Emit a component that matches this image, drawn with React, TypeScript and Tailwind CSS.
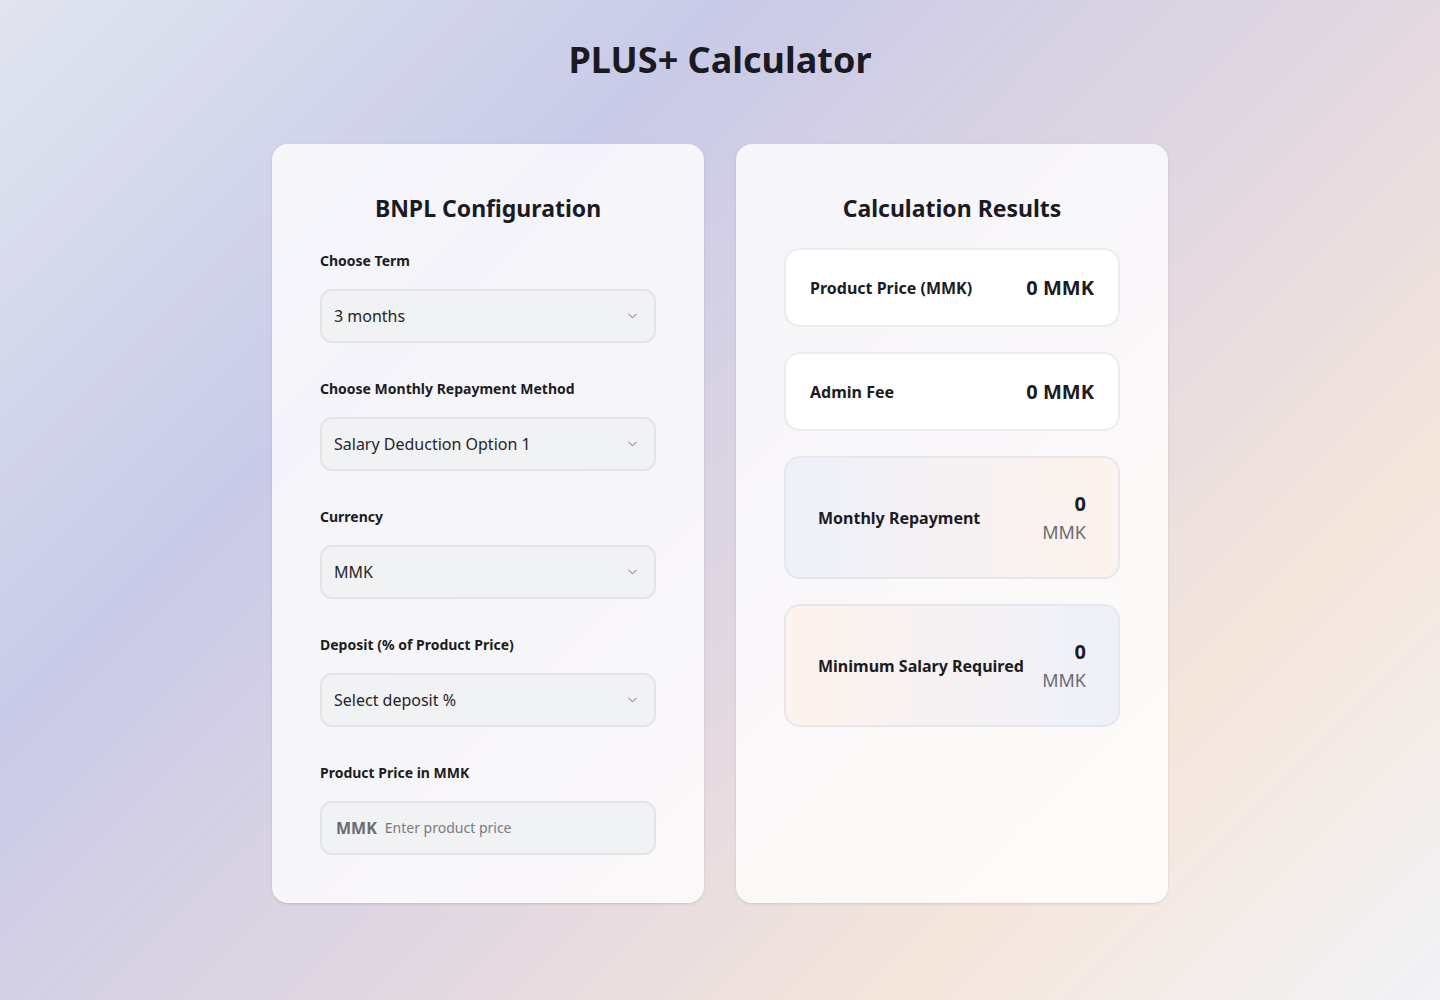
import { ChevronDown } from "lucide-react";

const font = { fontFamily: '"Noto Sans", "Open Sans", sans-serif' };

function SelectField({ label, value }: { label: string; value: string }) {
  return (
    <div>
      <div className="text-sm font-bold text-[#1c1c22] leading-5 mb-[18px]">{label}</div>
      <div className="relative h-[54px] rounded-xl border-2 border-[#e3e4e8] bg-[#f1f2f4] flex items-center pl-[12px] pr-4">
        <span className="text-base text-[#25252b]">{value}</span>
        <ChevronDown className="absolute right-[14px] top-1/2 -translate-y-1/2 w-[15px] h-[15px] text-[#6b6b73]" strokeWidth={1.6} />
      </div>
    </div>
  );
}

function ResultRow({ label, value }: { label: string; value: string }) {
  return (
    <div className="h-[79px] rounded-2xl border-2 border-[#ebecf0] bg-white flex items-center justify-between px-6">
      <span className="text-base font-bold text-[#1c1c22]">{label}</span>
      <span className="text-xl font-bold text-[#1c1c22]">{value}</span>
    </div>
  );
}

function ResultStack({ label, reverse }: { label: string; reverse?: boolean }) {
  return (
    <div
      className={`h-[123px] rounded-2xl border-2 border-[#e6e6ec] flex items-center justify-between px-8 ${
        reverse
          ? "bg-gradient-to-r from-[#fdf3ec] to-[#eef0fa]"
          : "bg-gradient-to-r from-[#eef0fa] to-[#fdf3ec]"
      }`}
    >
      <span className="text-base font-bold text-[#1c1c22]">{label}</span>
      <div className="flex flex-col items-end">
        <span className="text-xl font-bold text-[#1c1c22] leading-7">0</span>
        <span className="text-lg text-[#6b6b73] leading-7">MMK</span>
      </div>
    </div>
  );
}

export default function App() {
  return (
    <div
      style={font}
      className="min-h-[1000px] w-full bg-[linear-gradient(135deg,#e1e5ef_0%,#c9cae8_30%,#e2d8e0_58%,#f5e6dc_78%,#f1f2f6_100%)] pt-10 pb-24"
    >
      <h1 className="text-center text-4xl font-bold leading-10 text-[#1a1a22] mb-16">PLUS+ Calculator</h1>
      <div className="max-w-[896px] mx-auto grid grid-cols-2 gap-8">
        <div className="rounded-2xl bg-white/80 shadow-sm px-12 pt-12 pb-12">
          <h2 className="text-[23px] font-bold text-center text-[#1a1a22] leading-8 mb-[27px]">BNPL Configuration</h2>
          <div className="flex flex-col gap-9">
            <SelectField label="Choose Term" value="3 months" />
            <SelectField label="Choose Monthly Repayment Method" value="Salary Deduction Option 1" />
            <SelectField label="Currency" value="MMK" />
            <SelectField label="Deposit (% of Product Price)" value="Select deposit %" />
            <div>
              <div className="text-sm font-bold text-[#1c1c22] leading-5 mb-[18px]">Product Price in MMK</div>
              <div className="h-[54px] rounded-xl border-2 border-[#e3e4e8] bg-[#f1f2f4] flex items-center pl-[14px] gap-2">
                <span className="text-base font-bold text-[#6b6b73]">MMK</span>
                <span className="text-sm text-[#7a7a82]">Enter product price</span>
              </div>
            </div>
          </div>
        </div>
        <div className="rounded-2xl bg-white/80 shadow-sm px-12 pt-12 pb-12">
          <h2 className="text-[23px] font-bold text-center text-[#1a1a22] leading-8 mb-6">Calculation Results</h2>
          <div className="flex flex-col gap-[25px]">
            <ResultRow label="Product Price (MMK)" value="0 MMK" />
            <ResultRow label="Admin Fee" value="0 MMK" />
            <ResultStack label="Monthly Repayment" />
            <ResultStack label="Minimum Salary Required" reverse />
          </div>
        </div>
      </div>
    </div>
  );
}
